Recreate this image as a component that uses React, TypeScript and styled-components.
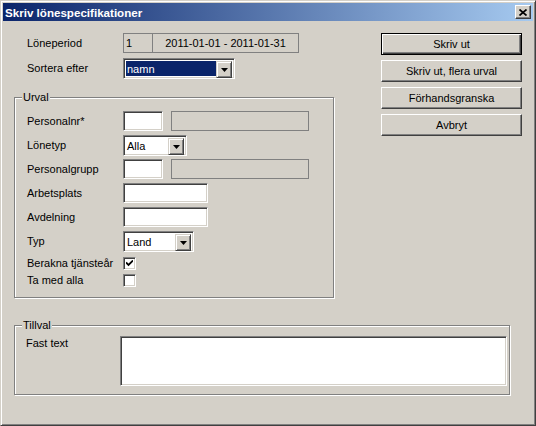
import React from 'react'
import styled, { createGlobalStyle, css } from 'styled-components'

const GlobalStyle = createGlobalStyle`
  html, body {
    margin: 0;
    padding: 0;
    background: #d4d0c8;
  }
  body {
    font-family: "Liberation Sans", Arial, sans-serif;
    font-size: 11px;
    color: #000;
  }
`

const Window = styled.div`
  width: 536px;
  height: 426px;
  box-sizing: border-box;
  border: 1px solid;
  border-color: #d4d0c8 #404040 #404040 #d4d0c8;
  box-shadow: inset 1px 1px #fff, inset -1px -1px #808080;
  padding: 2px;
  background: #d4d0c8;
  display: flex;
  flex-direction: column;
`

const TitleBar = styled.div`
  height: 18px;
  flex-shrink: 0;
  display: flex;
  align-items: center;
  padding-left: 2px;
  background: linear-gradient(to right, #0a246a, #a6caf0);
`

const Title = styled.div`
  flex-grow: 1;
  color: #fff;
  font-weight: bold;
  font-size: 11.6px;
`

const CloseButton = styled.div`
  width: 16px;
  height: 14px;
  box-sizing: border-box;
  margin-right: 2px;
  border: 1px solid;
  border-color: #fff #404040 #404040 #fff;
  box-shadow: inset -1px -1px #808080;
  background: #d4d0c8;
  display: flex;
  align-items: center;
  justify-content: center;
`

const Body = styled.div`
  flex-grow: 1;
  padding: 12px 0 0 11px;
`

const Main = styled.div`
  display: flex;
  align-items: flex-start;
`

const LeftCol = styled.div`
  width: 320px;
  display: flex;
  flex-direction: column;
`

const TopRow = styled.div<{ $gap?: number }>`
  display: flex;
  align-items: flex-start;
  padding-left: 13px;
  height: 20px;
  margin-top: ${p => p.$gap || 0}px;
`

const Label = styled.div<{ $h?: number; $w?: number }>`
  width: ${p => p.$w || 96}px;
  flex-shrink: 0;
  height: ${p => p.$h || 20}px;
  line-height: ${p => p.$h || 20}px;
  white-space: nowrap;
`

const GroupBox = styled.div<{ $w: number; $mt: number }>`
  position: relative;
  width: ${p => p.$w}px;
  box-sizing: border-box;
  margin-top: ${p => p.$mt}px;
  border: 1px solid #808080;
  box-shadow: 1px 1px 0 #fff, inset 1px 1px 0 #fff;
`

const Legend = styled.span`
  position: absolute;
  top: -7px;
  left: 7px;
  padding: 0 1px;
  line-height: 13px;
  background: #d4d0c8;
`

const UrvalBody = styled.div`
  display: flex;
  flex-direction: column;
  gap: 4px;
  padding: 13px 0 8px 12px;
`

const CheckRows = styled.div`
  display: flex;
  flex-direction: column;
`

const Row = styled.div<{ $h?: number }>`
  display: flex;
  align-items: flex-start;
  height: ${p => p.$h || 20}px;
`

const sunken = css`
  box-sizing: border-box;
  border: 1px solid;
  border-color: #808080 #fff #fff #808080;
  box-shadow: inset 1px 1px #404040, inset -1px -1px #d4d0c8;
`

const TextBox = styled.div<{ $w: number; $h?: number }>`
  ${sunken}
  width: ${p => p.$w}px;
  height: ${p => p.$h || 20}px;
  background: #fff;
`

const DisabledBox = styled.div<{ $w: number }>`
  width: ${p => p.$w}px;
  height: 20px;
  box-sizing: border-box;
  margin-left: 8px;
  border: 1px solid #808080;
  background: #d4d0c8;
`

const PeriodBox = styled.div`
  display: flex;
  width: 176px;
  height: 20px;
  box-sizing: border-box;
  border: 1px solid #808080;
`

const PeriodCell = styled.div<{ $w?: number; $center?: boolean }>`
  ${p => (p.$w ? `width: ${p.$w}px;` : 'flex-grow: 1;')}
  line-height: 18px;
  padding-left: ${p => (p.$center ? 0 : 2)}px;
  text-align: ${p => (p.$center ? 'center' : 'left')};
  border-left: ${p => (p.$center ? '1px solid #808080' : 'none')};
`

const ComboBox = styled.div<{ $w: number }>`
  ${sunken}
  width: ${p => p.$w}px;
  height: 21px;
  padding: 2px;
  background: #fff;
  display: flex;
`

const ComboValue = styled.div<{ $selected?: boolean }>`
  flex-grow: 1;
  line-height: 17px;
  padding-left: 1px;
  background: ${p => (p.$selected ? '#0a246a' : '#fff')};
  color: ${p => (p.$selected ? '#fff' : '#000')};
`

const DropButton = styled.div`
  width: 16px;
  height: 17px;
  box-sizing: border-box;
  border: 1px solid;
  border-color: #d4d0c8 #404040 #404040 #d4d0c8;
  box-shadow: inset 1px 1px #fff, inset -1px -1px #808080;
  background: #d4d0c8;
  display: flex;
  align-items: center;
  justify-content: center;
`

const CheckBox = styled.div`
  ${sunken}
  width: 13px;
  height: 13px;
  margin-top: 2px;
  background: #fff;
  display: flex;
  align-items: center;
  justify-content: center;
`

const ButtonCol = styled.div`
  margin-left: 47px;
  display: flex;
  flex-direction: column;
  gap: 5px;
`

const Button = styled.div<{ $default?: boolean }>`
  width: 141px;
  height: 22px;
  box-sizing: border-box;
  display: flex;
  align-items: center;
  justify-content: center;
  background: #d4d0c8;
  border: 1px solid;
  ${p =>
    p.$default
      ? css`
          border-color: #000;
          box-shadow: inset 1px 1px #fff, inset -1px -1px #404040, inset -2px -2px #808080;
        `
      : css`
          border-color: #fff #404040 #404040 #fff;
          box-shadow: inset -1px -1px #808080;
        `}
`

const TillvalBody = styled.div`
  display: flex;
  align-items: flex-start;
  padding: 10px 0 8px 11px;
`

const Arrow = () => (
  <svg width="7" height="4" viewBox="0 0 7 4">
    <path d="M0 0h7L3.5 4z" fill="#000" />
  </svg>
)

const Check = () => (
  <svg width="7" height="7" viewBox="0 0 7 7">
    <path d="M0 2.5l2.5 2.5L7 0.5" stroke="#000" strokeWidth="1.8" fill="none" />
  </svg>
)

function Combo (props: { width: number, value: string, selected?: boolean }) {
  return <ComboBox $w={props.width}>
    <ComboValue $selected={props.selected}>{props.value}</ComboValue>
    <DropButton><Arrow /></DropButton>
  </ComboBox>
}

export default function App () {
  return <>
    <GlobalStyle />
    <Window>
      <TitleBar>
        <Title>Skriv lönespecifikationer</Title>
        <CloseButton>
          <svg width="8" height="7" viewBox="0 0 8 7">
            <path d="M0.5 0.5L7.5 6.5M7.5 0.5L0.5 6.5" stroke="#000" strokeWidth="1.7" />
          </svg>
        </CloseButton>
      </TitleBar>
      <Body>
        <Main>
          <LeftCol>
            <TopRow>
              <Label>Löneperiod</Label>
              <PeriodBox>
                <PeriodCell $w={26}>1</PeriodCell>
                <PeriodCell $center>2011-01-01 - 2011-01-31</PeriodCell>
              </PeriodBox>
            </TopRow>
            <TopRow $gap={5}>
              <Label>Sortera efter</Label>
              <Combo width={112} value="namn" selected />
            </TopRow>
            <GroupBox $w={320} $mt={19}>
              <Legend>Urval</Legend>
              <UrvalBody>
                <Row>
                  <Label>Personalnr*</Label>
                  <TextBox $w={40} />
                  <DisabledBox $w={138} />
                </Row>
                <Row>
                  <Label>Lönetyp</Label>
                  <Combo width={64} value="Alla" />
                </Row>
                <Row>
                  <Label>Personalgrupp</Label>
                  <TextBox $w={40} />
                  <DisabledBox $w={138} />
                </Row>
                <Row>
                  <Label>Arbetsplats</Label>
                  <TextBox $w={85} />
                </Row>
                <Row>
                  <Label>Avdelning</Label>
                  <TextBox $w={85} />
                </Row>
                <Row>
                  <Label>Typ</Label>
                  <Combo width={71} value="Land" />
                </Row>
                <CheckRows>
                  <Row $h={17}>
                    <Label $h={17}>Berakna tjänsteår</Label>
                    <CheckBox><Check /></CheckBox>
                  </Row>
                  <Row $h={17}>
                    <Label $h={17}>Ta med alla</Label>
                    <CheckBox />
                  </Row>
                </CheckRows>
              </UrvalBody>
            </GroupBox>
          </LeftCol>
          <ButtonCol>
            <Button $default>Skriv ut</Button>
            <Button>Skriv ut, flera urval</Button>
            <Button>Förhandsgranska</Button>
            <Button>Avbryt</Button>
          </ButtonCol>
        </Main>
        <GroupBox $w={496} $mt={27}>
          <Legend>Tillval</Legend>
          <TillvalBody>
            <Label $w={94} $h={14}>Fast text</Label>
            <TextBox $w={387} $h={50} />
          </TillvalBody>
        </GroupBox>
      </Body>
    </Window>
  </>
}
